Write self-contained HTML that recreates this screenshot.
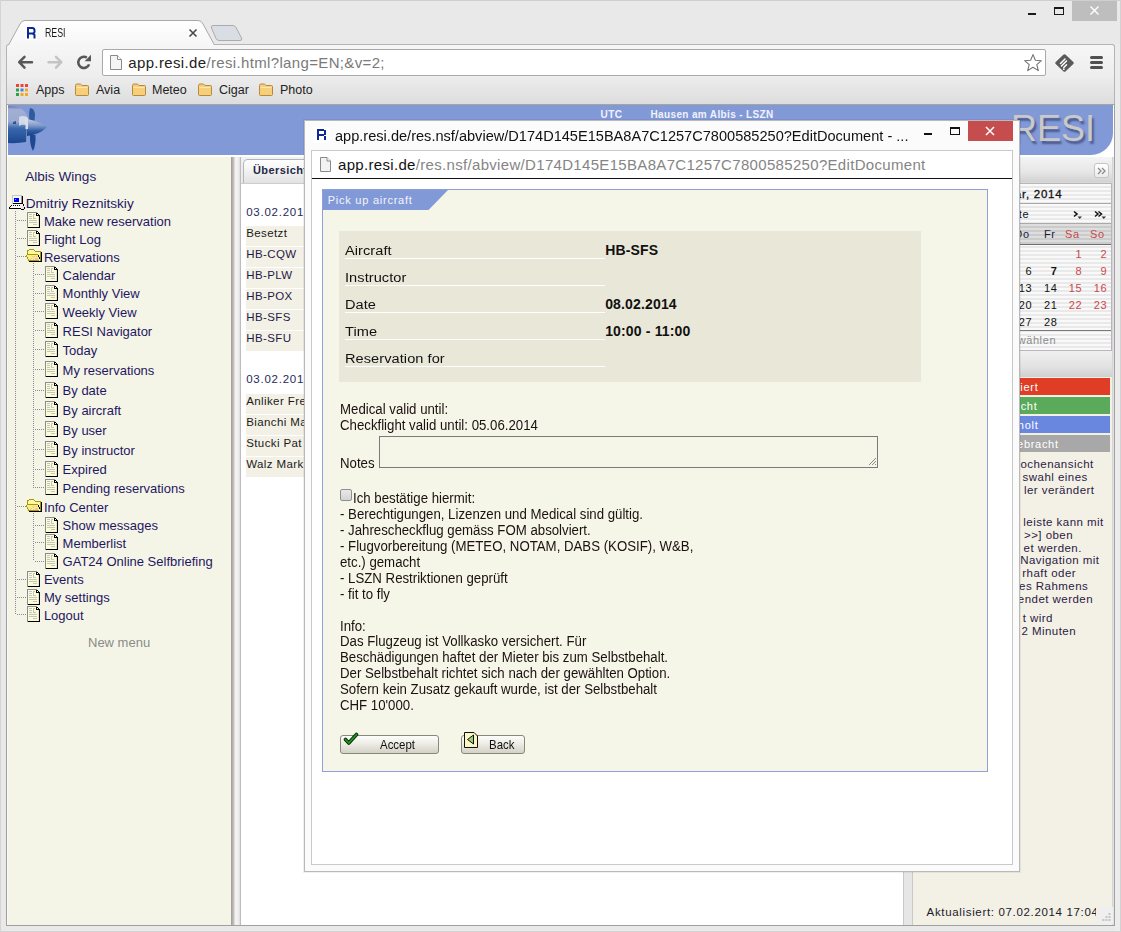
<!DOCTYPE html>
<html><head><meta charset="utf-8">
<style>
*{margin:0;padding:0;box-sizing:border-box}
html,body{width:1121px;height:932px;overflow:hidden;background:#e9e9e9;font-family:"Liberation Sans",sans-serif;position:relative}
.a{position:absolute}
.t{position:absolute;white-space:nowrap;line-height:16px}
.menu{color:#1f1763;font-size:13px}
.vd{font-size:11px;letter-spacing:0.65px}
</style></head><body>

<!-- ===== window frame ===== -->
<div class="a" style="left:0;top:0;width:1121px;height:1px;background:#cfcfcf"></div>
<div class="a" style="left:0;top:0;width:1px;height:932px;background:#d4d4d4"></div>
<div class="a" style="left:1115px;top:44px;width:5px;height:888px;background:#ececec"></div>
<div class="a" style="left:1120px;top:0;width:1px;height:932px;background:#d2d2d2"></div>
<div class="a" style="left:0;top:931px;width:1121px;height:1px;background:#d4d4d4"></div>

<!-- window controls -->
<div class="a" style="left:1028px;top:13px;width:8px;height:2px;background:#1a1a1a"></div>
<div class="a" style="left:1054px;top:7px;width:10px;height:8px;border:1px solid #1a1a1a;border-top-width:2px"></div>
<div class="a" style="left:1072px;top:1px;width:45px;height:20px;background:#bebebe"></div>
<svg class="a" style="left:1088px;top:5px" width="14" height="12"><path d="M2.5 1.5 L10.5 9.5 M10.5 1.5 L2.5 9.5" stroke="#fff" stroke-width="1.4"/></svg>

<!-- toolbar -->
<div class="a" style="left:6px;top:44px;width:1109px;height:61px;background:linear-gradient(#f6f6f6,#eeeeee 50%,#dcdcdc);border:1px solid #b4b4b4;border-bottom:none;border-radius:3px 3px 0 0"></div>

<!-- tab -->
<svg class="a" style="left:0;top:0" width="260" height="46">
 <defs><linearGradient id="tg" x1="0" y1="0" x2="0" y2="1"><stop offset="0" stop-color="#ffffff"/><stop offset="1" stop-color="#f6f6f6"/></linearGradient></defs>
 <path d="M8.5 45 L20 24 Q21.5 20.5 25 20.5 L198 20.5 Q201.5 20.5 203 24 L214.5 45" fill="url(#tg)" stroke="#a9a9a9" stroke-width="1"/>
 <path d="M211.5 28 Q210.5 25.5 213 25.5 L233 25.5 Q235 25.5 236 27.5 L241.5 38 Q242.5 40.5 240 40.5 L219 40.5 Q217 40.5 216 38.5 Z" fill="#d9dee5" stroke="#ababab" stroke-width="1"/>
</svg>
<div class="a" style="left:25px;top:26px;width:12px;height:14px;background:#fff"></div>
<svg class="a" style="left:26px;top:27px" width="11" height="13"><path d="M2 11.5 L2 1 L6.5 1 Q8.5 1 8.5 3.5 L8.5 4.5 Q8.5 6.5 6.5 6.5 L2 6.5 M6.5 6.5 L8.5 8 L8.5 11.5" stroke="#0a2896" stroke-width="2" fill="none"/></svg>
<div class="t" style="left:44.8px;top:26.3px;font-size:12.4px;color:#1a1a1a;line-height:14px;transform:scaleX(0.71);transform-origin:0 0">RESI</div>
<svg class="a" style="left:188px;top:28px" width="10" height="10"><path d="M1.5 1.5 L8.5 8.5 M8.5 1.5 L1.5 8.5" stroke="#4a4a4a" stroke-width="1.6"/></svg>

<!-- nav buttons -->
<svg class="a" style="left:16px;top:53px" width="80" height="20">
 <path d="M3.5 9.2 L16 9.2 M3.2 9.2 L8.5 3.8 M3.2 9.2 L8.5 14.6" stroke="#585858" stroke-width="2.5" fill="none" stroke-linecap="round" stroke-linejoin="round"/>
 <path d="M32.5 9.2 L45 9.2 M45.3 9.2 L40 3.8 M45.3 9.2 L40 14.6" stroke="#c4c4c4" stroke-width="2.5" fill="none" stroke-linecap="round" stroke-linejoin="round"/>
 <path d="M70.8 4.6 A5.6 5.6 0 1 0 73.1 11.4" stroke="#575757" stroke-width="2.6" fill="none"/>
 <path d="M75 1.8 L75 8.2 L68.6 8.2 Z" fill="#575757"/>
</svg>

<!-- address box -->
<div class="a" style="left:102px;top:49px;width:944px;height:27px;background:#fff;border:1px solid #a9a9a9;border-radius:2px"></div>
<svg class="a" style="left:109px;top:54px" width="14" height="17"><path d="M1.5 1.5 L8.5 1.5 L12.5 5.5 L12.5 15.5 L1.5 15.5 Z" fill="#f4f4f4" stroke="#8a8a8a"/><path d="M8.5 1.5 L8.5 5.5 L12.5 5.5" fill="#fff" stroke="#8a8a8a"/></svg>
<div class="t" style="left:128.3px;top:54px;font-size:15px;color:#222;line-height:18px;letter-spacing:0.35px">app.resi.de<span style="color:#7a7a7a">/resi.html?lang=EN;&amp;v=2;</span></div>
<svg class="a" style="left:1022px;top:52px" width="22" height="22"><path d="M11 2.6 L13.4 8.3 L19.4 8.7 L14.8 12.6 L16.3 18.6 L11 15.3 L5.7 18.6 L7.2 12.6 L2.6 8.7 L8.6 8.3 Z" fill="#fff" stroke="#747474" stroke-width="1.1" stroke-linejoin="round"/></svg>
<svg class="a" style="left:1054px;top:53px" width="22" height="20"><path d="M9.3 1.8 Q10.5 0.8 11.7 1.8 L19.3 9.0 Q20.3 10 19.3 11 L11.7 18.2 Q10.5 19.2 9.3 18.2 L1.7 11 Q0.7 10 1.7 9.0 Z" fill="#5a5a5a"/><path d="M6.5 10.5 L11 6 M7.5 13 L12.5 8 M9.8 14.5 L12.5 11.8" stroke="#fff" stroke-width="1.5" stroke-linecap="round"/><circle cx="9.8" cy="16.2" r="0.9" fill="#fff"/></svg>
<div class="a" style="left:1090px;top:56px;width:13px;height:3px;background:#505050;border-radius:1.5px"></div>
<div class="a" style="left:1090px;top:61px;width:13px;height:3px;background:#505050;border-radius:1.5px"></div>
<div class="a" style="left:1090px;top:66px;width:13px;height:3px;background:#505050;border-radius:1.5px"></div>

<!-- bookmarks -->
<svg class="a" style="left:15px;top:83px" width="14" height="14">
 <rect x="1" y="1" width="3" height="3" fill="#e8453c"/><rect x="5.5" y="1" width="3" height="3" fill="#e8453c"/><rect x="10" y="1" width="3" height="3" fill="#e8453c"/>
 <rect x="1" y="5.5" width="3" height="3" fill="#2fa04a"/><rect x="5.5" y="5.5" width="3" height="3" fill="#3b88e8"/><rect x="10" y="5.5" width="3" height="3" fill="#f5a623"/>
 <rect x="1" y="10" width="3" height="3" fill="#2fa04a"/><rect x="5.5" y="10" width="3" height="3" fill="#f5a623"/><rect x="10" y="10" width="3" height="3" fill="#f5a623"/>
</svg>
<div class="t" style="left:36px;top:82px;font-size:12.5px;color:#222;line-height:16px">Apps</div>
<svg class="a" style="left:74px;top:82px" width="16" height="15"><path d="M1.5 3.5 Q1.5 2 3 2 L6.5 2 L8 3.5 L13.5 3.5 Q14.5 3.5 14.5 4.5 L14.5 12.5 Q14.5 13.5 13.5 13.5 L2.5 13.5 Q1.5 13.5 1.5 12.5 Z" fill="#f7cf7a" stroke="#b58a3a"/><path d="M2.5 5.5 L13.5 5.5" stroke="#fbe7b5"/></svg><div class="t" style="left:96px;top:82px;font-size:12.5px;color:#222;line-height:16px">Avia</div>
<svg class="a" style="left:131px;top:82px" width="16" height="15"><path d="M1.5 3.5 Q1.5 2 3 2 L6.5 2 L8 3.5 L13.5 3.5 Q14.5 3.5 14.5 4.5 L14.5 12.5 Q14.5 13.5 13.5 13.5 L2.5 13.5 Q1.5 13.5 1.5 12.5 Z" fill="#f7cf7a" stroke="#b58a3a"/><path d="M2.5 5.5 L13.5 5.5" stroke="#fbe7b5"/></svg><div class="t" style="left:152px;top:82px;font-size:12.5px;color:#222;line-height:16px">Meteo</div>
<svg class="a" style="left:197px;top:82px" width="16" height="15"><path d="M1.5 3.5 Q1.5 2 3 2 L6.5 2 L8 3.5 L13.5 3.5 Q14.5 3.5 14.5 4.5 L14.5 12.5 Q14.5 13.5 13.5 13.5 L2.5 13.5 Q1.5 13.5 1.5 12.5 Z" fill="#f7cf7a" stroke="#b58a3a"/><path d="M2.5 5.5 L13.5 5.5" stroke="#fbe7b5"/></svg><div class="t" style="left:219px;top:82px;font-size:12.5px;color:#222;line-height:16px">Cigar</div>
<svg class="a" style="left:258px;top:82px" width="16" height="15"><path d="M1.5 3.5 Q1.5 2 3 2 L6.5 2 L8 3.5 L13.5 3.5 Q14.5 3.5 14.5 4.5 L14.5 12.5 Q14.5 13.5 13.5 13.5 L2.5 13.5 Q1.5 13.5 1.5 12.5 Z" fill="#f7cf7a" stroke="#b58a3a"/><path d="M2.5 5.5 L13.5 5.5" stroke="#fbe7b5"/></svg><div class="t" style="left:280px;top:82px;font-size:12.5px;color:#222;line-height:16px">Photo</div>


<!-- ===== page ===== -->
<div class="a" style="left:6px;top:104px;width:1109px;height:1px;background:#a8a49c"></div>
<div class="a" style="left:6px;top:105px;width:1109px;height:821px;background:#fff;border-left:1px solid #a0a0a0;border-right:1px solid #a0a0a0;border-bottom:1px solid #a0a0a0"></div>


<!-- banner -->
<div class="a" style="left:8px;top:105px;width:1105px;height:50px;background:#8299d7;border-bottom-right-radius:22px;overflow:hidden">
 <svg class="a" style="left:0;top:0" width="60" height="50">
  <defs>
   <linearGradient id="pb" x1="0" y1="0" x2="0" y2="1"><stop offset="0" stop-color="#5f7ab8"/><stop offset="0.1" stop-color="#a2afd4"/><stop offset="0.42" stop-color="#9aaad0"/><stop offset="0.6" stop-color="#3a68ac"/><stop offset="1" stop-color="#1a4890"/></linearGradient>
   <linearGradient id="pc" x1="0" y1="0" x2="0" y2="1"><stop offset="0" stop-color="#c4cee4"/><stop offset="0.4" stop-color="#7e98c8"/><stop offset="0.7" stop-color="#2d5ca6"/><stop offset="1" stop-color="#173f86"/></linearGradient>
   <filter id="bl" x="-20%" y="-20%" width="140%" height="140%"><feGaussianBlur stdDeviation="0.45"/></filter>
  </defs>
  <g filter="url(#bl)">
  <path d="M0 1 Q15 0 19 11 L18 37 Q10 38.5 0 38 Z" fill="url(#pb)"/>
  <path d="M22 3 Q26 3 27 9 L26.5 17 L21.5 17 Q20.5 8 22 3 Z" fill="#2d5a9e"/>
  <path d="M22 30 L27.5 30 Q28 40 25 46 Q21.5 40 22 30 Z" fill="#1c4a90"/>
  <path d="M19 14 Q30 16 39 22 Q31 30 19 31 Z" fill="url(#pc)"/>
  <path d="M17.5 11 L20 13 L20 24 L17.5 24 Z" fill="#d8dde8"/>
  <path d="M11 12 Q15 10 18 12 L18 20 Q14 19 11 21 Z" fill="#e6eaf2" opacity="0.75"/>
  <path d="M5 17 L8 16 L8 19 L5 19 Z" fill="#1a3f80" opacity="0.8"/>
  </g>
 </svg>
</div>
<div class="t" style="left:600.5px;top:108.6px;font-size:10px;font-weight:bold;color:#f0f2fc;line-height:12px;letter-spacing:0.5px">UTC</div>
<div class="t" style="left:650.5px;top:108.6px;font-size:10px;font-weight:bold;color:#f0f2fc;line-height:12px;letter-spacing:0.36px">Hausen am Albis - LSZN</div>
<div class="t" style="left:1011px;top:109px;font-size:36px;color:#c9c9c9;line-height:40px;text-shadow:2px 3px 2px #4a5a90">RESI</div>
<div class="a" style="left:8px;top:155px;width:1105px;height:2px;background:#fff"></div>

<!-- sidebar -->
<div class="a" style="left:7px;top:157px;width:224px;height:768px;background:#f5f5e7;border-left:1px solid #fafaf2"></div>
<div class="a" style="left:231px;top:157px;width:10px;height:768px;background:linear-gradient(90deg,#a19b95 0,#c9c6c2 3px,#f2f2f2 4px,#f2f2f2 7px,#e3e3e3 8px,#e3e3e3 9px,#bdbdbd 9px)"></div>

<div class="t menu" style="left:25.2px;top:168.80px;font-size:13.6px">Albis Wings</div>
<svg class="a" style="left:9px;top:195px" width="17" height="17" shape-rendering="crispEdges"><rect x="3" y="0" width="10" height="9" fill="#c8c8c8"/><rect x="4" y="1" width="8" height="7" fill="#f4f4f4"/><rect x="12" y="1" width="1" height="8" fill="#9a9a9a"/><rect x="13" y="1" width="1" height="8" fill="#000"/><rect x="4" y="8" width="10" height="1" fill="#000"/><rect x="5" y="3" width="5" height="4" fill="#0000f0"/><rect x="6" y="4" width="1" height="1" fill="#20e0f0"/><rect x="2" y="10" width="11" height="3" fill="#f8f8f8"/><g fill="#000"><rect x="2" y="10" width="1" height="1"/><rect x="4" y="10" width="1" height="1"/><rect x="6" y="10" width="1" height="1"/><rect x="8" y="10" width="1" height="1"/><rect x="10" y="10" width="1" height="1"/><rect x="1" y="11" width="1" height="1"/><rect x="0" y="12" width="1" height="1"/><rect x="0" y="13" width="12" height="1"/><rect x="14" y="9" width="1" height="3"/><rect x="15" y="12" width="1" height="2"/><rect x="12" y="14" width="3" height="1"/><rect x="14" y="13" width="1" height="1"/></g><rect x="12" y="11" width="3" height="3" fill="#e8e8e8"/></svg>
<div class="t menu" style="left:25.7px;top:195.60px;font-size:13.6px">Dmitriy Reznitskiy</div>
<div class="a" style="left:15px;top:211px;width:1px;height:404px;background:repeating-linear-gradient(180deg,#8a8a8a 0 1px,transparent 1px 2px)"></div>
<div class="a" style="left:33px;top:263px;width:1px;height:225px;background:repeating-linear-gradient(180deg,#8a8a8a 0 1px,transparent 1px 2px)"></div>
<div class="a" style="left:33px;top:513px;width:1px;height:48px;background:repeating-linear-gradient(180deg,#8a8a8a 0 1px,transparent 1px 2px)"></div>
<div class="a" style="left:17px;top:220px;width:10px;height:1px;background:repeating-linear-gradient(90deg,#8a8a8a 0 1px,transparent 1px 2px)"></div>
<svg class="a" style="left:27px;top:212px" width="14" height="17" shape-rendering="crispEdges"><rect x="1" y="1" width="11" height="14" fill="#fbfbd6"/><rect x="11" y="4" width="1" height="11" fill="#e2e2d0"/><rect x="0" y="0" width="10" height="1" fill="#8c8c8c"/><rect x="0" y="0" width="1" height="16" fill="#8c8c8c"/><rect x="12" y="3" width="1" height="13" fill="#000"/><rect x="1" y="15" width="12" height="1" fill="#000"/><rect x="10" y="1" width="1" height="1" fill="#000"/><rect x="11" y="2" width="1" height="1" fill="#000"/><rect x="10" y="2" width="1" height="1" fill="#fff"/><rect x="9" y="3" width="3" height="1" fill="#000"/><rect x="9" y="1" width="1" height="2" fill="#000"/><g fill="#c4c4c0"><rect x="2" y="2" width="3" height="1"/><rect x="2" y="4" width="3" height="1"/><rect x="2" y="6" width="3" height="1"/><rect x="6" y="2" width="2" height="1"/><rect x="6" y="2" width="1" height="5"/><rect x="6" y="6" width="3" height="1"/><rect x="2" y="8" width="8" height="1"/><rect x="2" y="10" width="8" height="1"/><rect x="6" y="12" width="4" height="1"/></g></svg>
<div class="t menu" style="left:43.9px;top:213.80px">Make new reservation</div>
<div class="a" style="left:17px;top:238px;width:10px;height:1px;background:repeating-linear-gradient(90deg,#8a8a8a 0 1px,transparent 1px 2px)"></div>
<svg class="a" style="left:27px;top:230px" width="14" height="17" shape-rendering="crispEdges"><rect x="1" y="1" width="11" height="14" fill="#fbfbd6"/><rect x="11" y="4" width="1" height="11" fill="#e2e2d0"/><rect x="0" y="0" width="10" height="1" fill="#8c8c8c"/><rect x="0" y="0" width="1" height="16" fill="#8c8c8c"/><rect x="12" y="3" width="1" height="13" fill="#000"/><rect x="1" y="15" width="12" height="1" fill="#000"/><rect x="10" y="1" width="1" height="1" fill="#000"/><rect x="11" y="2" width="1" height="1" fill="#000"/><rect x="10" y="2" width="1" height="1" fill="#fff"/><rect x="9" y="3" width="3" height="1" fill="#000"/><rect x="9" y="1" width="1" height="2" fill="#000"/><g fill="#c4c4c0"><rect x="2" y="2" width="3" height="1"/><rect x="2" y="4" width="3" height="1"/><rect x="2" y="6" width="3" height="1"/><rect x="6" y="2" width="2" height="1"/><rect x="6" y="2" width="1" height="5"/><rect x="6" y="6" width="3" height="1"/><rect x="2" y="8" width="8" height="1"/><rect x="2" y="10" width="8" height="1"/><rect x="6" y="12" width="4" height="1"/></g></svg>
<div class="t menu" style="left:43.9px;top:231.60px">Flight Log</div>
<div class="a" style="left:17px;top:256px;width:10px;height:1px;background:repeating-linear-gradient(90deg,#8a8a8a 0 1px,transparent 1px 2px)"></div>
<svg class="a" style="left:26px;top:249px" width="17" height="14" shape-rendering="crispEdges"><g fill="#fff7a0"><rect x="2" y="1" width="6" height="4"/><rect x="8" y="3" width="6" height="3"/></g><g fill="#a39b00"><rect x="3" y="0" width="5" height="1"/><rect x="1" y="1" width="2" height="1"/><rect x="1" y="1" width="1" height="5"/><rect x="8" y="1" width="1" height="1"/><rect x="9" y="2" width="6" height="1"/><rect x="14" y="2" width="1" height="10"/></g><rect x="15" y="3" width="1" height="10" fill="#000"/><rect x="1" y="6" width="12" height="6" fill="#f8ee90"/><g fill="#f4c0a0"><rect x="6" y="7" width="1" height="1"/><rect x="8" y="7" width="1" height="1"/><rect x="10" y="7" width="1" height="1"/><rect x="5" y="9" width="1" height="1"/><rect x="7" y="8" width="1" height="1"/><rect x="9" y="9" width="3" height="2"/><rect x="4" y="10" width="1" height="1"/><rect x="7" y="10" width="1" height="1"/></g><g fill="#a39b00"><rect x="1" y="5" width="11" height="1"/><rect x="0" y="6" width="1" height="2"/><rect x="1" y="8" width="1" height="2"/><rect x="2" y="10" width="1" height="2"/><rect x="3" y="11" width="10" height="1"/></g><rect x="12" y="6" width="1" height="2" fill="#000"/><rect x="13" y="8" width="1" height="2" fill="#000"/><rect x="3" y="12" width="13" height="1" fill="#000"/></svg>
<div class="t menu" style="left:43.9px;top:249.70px">Reservations</div>
<div class="a" style="left:35px;top:274px;width:10px;height:1px;background:repeating-linear-gradient(90deg,#8a8a8a 0 1px,transparent 1px 2px)"></div>
<svg class="a" style="left:45px;top:266px" width="14" height="17" shape-rendering="crispEdges"><rect x="1" y="1" width="11" height="14" fill="#fbfbd6"/><rect x="11" y="4" width="1" height="11" fill="#e2e2d0"/><rect x="0" y="0" width="10" height="1" fill="#8c8c8c"/><rect x="0" y="0" width="1" height="16" fill="#8c8c8c"/><rect x="12" y="3" width="1" height="13" fill="#000"/><rect x="1" y="15" width="12" height="1" fill="#000"/><rect x="10" y="1" width="1" height="1" fill="#000"/><rect x="11" y="2" width="1" height="1" fill="#000"/><rect x="10" y="2" width="1" height="1" fill="#fff"/><rect x="9" y="3" width="3" height="1" fill="#000"/><rect x="9" y="1" width="1" height="2" fill="#000"/><g fill="#c4c4c0"><rect x="2" y="2" width="3" height="1"/><rect x="2" y="4" width="3" height="1"/><rect x="2" y="6" width="3" height="1"/><rect x="6" y="2" width="2" height="1"/><rect x="6" y="2" width="1" height="5"/><rect x="6" y="6" width="3" height="1"/><rect x="2" y="8" width="8" height="1"/><rect x="2" y="10" width="8" height="1"/><rect x="6" y="12" width="4" height="1"/></g></svg>
<div class="t menu" style="left:62.6px;top:267.60px">Calendar</div>
<div class="a" style="left:35px;top:293px;width:10px;height:1px;background:repeating-linear-gradient(90deg,#8a8a8a 0 1px,transparent 1px 2px)"></div>
<svg class="a" style="left:45px;top:285px" width="14" height="17" shape-rendering="crispEdges"><rect x="1" y="1" width="11" height="14" fill="#fbfbd6"/><rect x="11" y="4" width="1" height="11" fill="#e2e2d0"/><rect x="0" y="0" width="10" height="1" fill="#8c8c8c"/><rect x="0" y="0" width="1" height="16" fill="#8c8c8c"/><rect x="12" y="3" width="1" height="13" fill="#000"/><rect x="1" y="15" width="12" height="1" fill="#000"/><rect x="10" y="1" width="1" height="1" fill="#000"/><rect x="11" y="2" width="1" height="1" fill="#000"/><rect x="10" y="2" width="1" height="1" fill="#fff"/><rect x="9" y="3" width="3" height="1" fill="#000"/><rect x="9" y="1" width="1" height="2" fill="#000"/><g fill="#c4c4c0"><rect x="2" y="2" width="3" height="1"/><rect x="2" y="4" width="3" height="1"/><rect x="2" y="6" width="3" height="1"/><rect x="6" y="2" width="2" height="1"/><rect x="6" y="2" width="1" height="5"/><rect x="6" y="6" width="3" height="1"/><rect x="2" y="8" width="8" height="1"/><rect x="2" y="10" width="8" height="1"/><rect x="6" y="12" width="4" height="1"/></g></svg>
<div class="t menu" style="left:62.6px;top:286.10px">Monthly View</div>
<div class="a" style="left:35px;top:311px;width:10px;height:1px;background:repeating-linear-gradient(90deg,#8a8a8a 0 1px,transparent 1px 2px)"></div>
<svg class="a" style="left:45px;top:303px" width="14" height="17" shape-rendering="crispEdges"><rect x="1" y="1" width="11" height="14" fill="#fbfbd6"/><rect x="11" y="4" width="1" height="11" fill="#e2e2d0"/><rect x="0" y="0" width="10" height="1" fill="#8c8c8c"/><rect x="0" y="0" width="1" height="16" fill="#8c8c8c"/><rect x="12" y="3" width="1" height="13" fill="#000"/><rect x="1" y="15" width="12" height="1" fill="#000"/><rect x="10" y="1" width="1" height="1" fill="#000"/><rect x="11" y="2" width="1" height="1" fill="#000"/><rect x="10" y="2" width="1" height="1" fill="#fff"/><rect x="9" y="3" width="3" height="1" fill="#000"/><rect x="9" y="1" width="1" height="2" fill="#000"/><g fill="#c4c4c0"><rect x="2" y="2" width="3" height="1"/><rect x="2" y="4" width="3" height="1"/><rect x="2" y="6" width="3" height="1"/><rect x="6" y="2" width="2" height="1"/><rect x="6" y="2" width="1" height="5"/><rect x="6" y="6" width="3" height="1"/><rect x="2" y="8" width="8" height="1"/><rect x="2" y="10" width="8" height="1"/><rect x="6" y="12" width="4" height="1"/></g></svg>
<div class="t menu" style="left:62.6px;top:304.90px">Weekly View</div>
<div class="a" style="left:35px;top:330px;width:10px;height:1px;background:repeating-linear-gradient(90deg,#8a8a8a 0 1px,transparent 1px 2px)"></div>
<svg class="a" style="left:45px;top:322px" width="14" height="17" shape-rendering="crispEdges"><rect x="1" y="1" width="11" height="14" fill="#fbfbd6"/><rect x="11" y="4" width="1" height="11" fill="#e2e2d0"/><rect x="0" y="0" width="10" height="1" fill="#8c8c8c"/><rect x="0" y="0" width="1" height="16" fill="#8c8c8c"/><rect x="12" y="3" width="1" height="13" fill="#000"/><rect x="1" y="15" width="12" height="1" fill="#000"/><rect x="10" y="1" width="1" height="1" fill="#000"/><rect x="11" y="2" width="1" height="1" fill="#000"/><rect x="10" y="2" width="1" height="1" fill="#fff"/><rect x="9" y="3" width="3" height="1" fill="#000"/><rect x="9" y="1" width="1" height="2" fill="#000"/><g fill="#c4c4c0"><rect x="2" y="2" width="3" height="1"/><rect x="2" y="4" width="3" height="1"/><rect x="2" y="6" width="3" height="1"/><rect x="6" y="2" width="2" height="1"/><rect x="6" y="2" width="1" height="5"/><rect x="6" y="6" width="3" height="1"/><rect x="2" y="8" width="8" height="1"/><rect x="2" y="10" width="8" height="1"/><rect x="6" y="12" width="4" height="1"/></g></svg>
<div class="t menu" style="left:62.6px;top:323.70px">RESI Navigator</div>
<div class="a" style="left:35px;top:349px;width:10px;height:1px;background:repeating-linear-gradient(90deg,#8a8a8a 0 1px,transparent 1px 2px)"></div>
<svg class="a" style="left:45px;top:341px" width="14" height="17" shape-rendering="crispEdges"><rect x="1" y="1" width="11" height="14" fill="#fbfbd6"/><rect x="11" y="4" width="1" height="11" fill="#e2e2d0"/><rect x="0" y="0" width="10" height="1" fill="#8c8c8c"/><rect x="0" y="0" width="1" height="16" fill="#8c8c8c"/><rect x="12" y="3" width="1" height="13" fill="#000"/><rect x="1" y="15" width="12" height="1" fill="#000"/><rect x="10" y="1" width="1" height="1" fill="#000"/><rect x="11" y="2" width="1" height="1" fill="#000"/><rect x="10" y="2" width="1" height="1" fill="#fff"/><rect x="9" y="3" width="3" height="1" fill="#000"/><rect x="9" y="1" width="1" height="2" fill="#000"/><g fill="#c4c4c0"><rect x="2" y="2" width="3" height="1"/><rect x="2" y="4" width="3" height="1"/><rect x="2" y="6" width="3" height="1"/><rect x="6" y="2" width="2" height="1"/><rect x="6" y="2" width="1" height="5"/><rect x="6" y="6" width="3" height="1"/><rect x="2" y="8" width="8" height="1"/><rect x="2" y="10" width="8" height="1"/><rect x="6" y="12" width="4" height="1"/></g></svg>
<div class="t menu" style="left:62.6px;top:342.90px">Today</div>
<div class="a" style="left:35px;top:369px;width:10px;height:1px;background:repeating-linear-gradient(90deg,#8a8a8a 0 1px,transparent 1px 2px)"></div>
<svg class="a" style="left:45px;top:361px" width="14" height="17" shape-rendering="crispEdges"><rect x="1" y="1" width="11" height="14" fill="#fbfbd6"/><rect x="11" y="4" width="1" height="11" fill="#e2e2d0"/><rect x="0" y="0" width="10" height="1" fill="#8c8c8c"/><rect x="0" y="0" width="1" height="16" fill="#8c8c8c"/><rect x="12" y="3" width="1" height="13" fill="#000"/><rect x="1" y="15" width="12" height="1" fill="#000"/><rect x="10" y="1" width="1" height="1" fill="#000"/><rect x="11" y="2" width="1" height="1" fill="#000"/><rect x="10" y="2" width="1" height="1" fill="#fff"/><rect x="9" y="3" width="3" height="1" fill="#000"/><rect x="9" y="1" width="1" height="2" fill="#000"/><g fill="#c4c4c0"><rect x="2" y="2" width="3" height="1"/><rect x="2" y="4" width="3" height="1"/><rect x="2" y="6" width="3" height="1"/><rect x="6" y="2" width="2" height="1"/><rect x="6" y="2" width="1" height="5"/><rect x="6" y="6" width="3" height="1"/><rect x="2" y="8" width="8" height="1"/><rect x="2" y="10" width="8" height="1"/><rect x="6" y="12" width="4" height="1"/></g></svg>
<div class="t menu" style="left:62.6px;top:362.90px">My reservations</div>
<div class="a" style="left:35px;top:390px;width:10px;height:1px;background:repeating-linear-gradient(90deg,#8a8a8a 0 1px,transparent 1px 2px)"></div>
<svg class="a" style="left:45px;top:382px" width="14" height="17" shape-rendering="crispEdges"><rect x="1" y="1" width="11" height="14" fill="#fbfbd6"/><rect x="11" y="4" width="1" height="11" fill="#e2e2d0"/><rect x="0" y="0" width="10" height="1" fill="#8c8c8c"/><rect x="0" y="0" width="1" height="16" fill="#8c8c8c"/><rect x="12" y="3" width="1" height="13" fill="#000"/><rect x="1" y="15" width="12" height="1" fill="#000"/><rect x="10" y="1" width="1" height="1" fill="#000"/><rect x="11" y="2" width="1" height="1" fill="#000"/><rect x="10" y="2" width="1" height="1" fill="#fff"/><rect x="9" y="3" width="3" height="1" fill="#000"/><rect x="9" y="1" width="1" height="2" fill="#000"/><g fill="#c4c4c0"><rect x="2" y="2" width="3" height="1"/><rect x="2" y="4" width="3" height="1"/><rect x="2" y="6" width="3" height="1"/><rect x="6" y="2" width="2" height="1"/><rect x="6" y="2" width="1" height="5"/><rect x="6" y="6" width="3" height="1"/><rect x="2" y="8" width="8" height="1"/><rect x="2" y="10" width="8" height="1"/><rect x="6" y="12" width="4" height="1"/></g></svg>
<div class="t menu" style="left:62.6px;top:383.10px">By date</div>
<div class="a" style="left:35px;top:409px;width:10px;height:1px;background:repeating-linear-gradient(90deg,#8a8a8a 0 1px,transparent 1px 2px)"></div>
<svg class="a" style="left:45px;top:401px" width="14" height="17" shape-rendering="crispEdges"><rect x="1" y="1" width="11" height="14" fill="#fbfbd6"/><rect x="11" y="4" width="1" height="11" fill="#e2e2d0"/><rect x="0" y="0" width="10" height="1" fill="#8c8c8c"/><rect x="0" y="0" width="1" height="16" fill="#8c8c8c"/><rect x="12" y="3" width="1" height="13" fill="#000"/><rect x="1" y="15" width="12" height="1" fill="#000"/><rect x="10" y="1" width="1" height="1" fill="#000"/><rect x="11" y="2" width="1" height="1" fill="#000"/><rect x="10" y="2" width="1" height="1" fill="#fff"/><rect x="9" y="3" width="3" height="1" fill="#000"/><rect x="9" y="1" width="1" height="2" fill="#000"/><g fill="#c4c4c0"><rect x="2" y="2" width="3" height="1"/><rect x="2" y="4" width="3" height="1"/><rect x="2" y="6" width="3" height="1"/><rect x="6" y="2" width="2" height="1"/><rect x="6" y="2" width="1" height="5"/><rect x="6" y="6" width="3" height="1"/><rect x="2" y="8" width="8" height="1"/><rect x="2" y="10" width="8" height="1"/><rect x="6" y="12" width="4" height="1"/></g></svg>
<div class="t menu" style="left:62.6px;top:402.90px">By aircraft</div>
<div class="a" style="left:35px;top:429px;width:10px;height:1px;background:repeating-linear-gradient(90deg,#8a8a8a 0 1px,transparent 1px 2px)"></div>
<svg class="a" style="left:45px;top:421px" width="14" height="17" shape-rendering="crispEdges"><rect x="1" y="1" width="11" height="14" fill="#fbfbd6"/><rect x="11" y="4" width="1" height="11" fill="#e2e2d0"/><rect x="0" y="0" width="10" height="1" fill="#8c8c8c"/><rect x="0" y="0" width="1" height="16" fill="#8c8c8c"/><rect x="12" y="3" width="1" height="13" fill="#000"/><rect x="1" y="15" width="12" height="1" fill="#000"/><rect x="10" y="1" width="1" height="1" fill="#000"/><rect x="11" y="2" width="1" height="1" fill="#000"/><rect x="10" y="2" width="1" height="1" fill="#fff"/><rect x="9" y="3" width="3" height="1" fill="#000"/><rect x="9" y="1" width="1" height="2" fill="#000"/><g fill="#c4c4c0"><rect x="2" y="2" width="3" height="1"/><rect x="2" y="4" width="3" height="1"/><rect x="2" y="6" width="3" height="1"/><rect x="6" y="2" width="2" height="1"/><rect x="6" y="2" width="1" height="5"/><rect x="6" y="6" width="3" height="1"/><rect x="2" y="8" width="8" height="1"/><rect x="2" y="10" width="8" height="1"/><rect x="6" y="12" width="4" height="1"/></g></svg>
<div class="t menu" style="left:62.6px;top:422.80px">By user</div>
<div class="a" style="left:35px;top:449px;width:10px;height:1px;background:repeating-linear-gradient(90deg,#8a8a8a 0 1px,transparent 1px 2px)"></div>
<svg class="a" style="left:45px;top:441px" width="14" height="17" shape-rendering="crispEdges"><rect x="1" y="1" width="11" height="14" fill="#fbfbd6"/><rect x="11" y="4" width="1" height="11" fill="#e2e2d0"/><rect x="0" y="0" width="10" height="1" fill="#8c8c8c"/><rect x="0" y="0" width="1" height="16" fill="#8c8c8c"/><rect x="12" y="3" width="1" height="13" fill="#000"/><rect x="1" y="15" width="12" height="1" fill="#000"/><rect x="10" y="1" width="1" height="1" fill="#000"/><rect x="11" y="2" width="1" height="1" fill="#000"/><rect x="10" y="2" width="1" height="1" fill="#fff"/><rect x="9" y="3" width="3" height="1" fill="#000"/><rect x="9" y="1" width="1" height="2" fill="#000"/><g fill="#c4c4c0"><rect x="2" y="2" width="3" height="1"/><rect x="2" y="4" width="3" height="1"/><rect x="2" y="6" width="3" height="1"/><rect x="6" y="2" width="2" height="1"/><rect x="6" y="2" width="1" height="5"/><rect x="6" y="6" width="3" height="1"/><rect x="2" y="8" width="8" height="1"/><rect x="2" y="10" width="8" height="1"/><rect x="6" y="12" width="4" height="1"/></g></svg>
<div class="t menu" style="left:62.6px;top:442.90px">By instructor</div>
<div class="a" style="left:35px;top:469px;width:10px;height:1px;background:repeating-linear-gradient(90deg,#8a8a8a 0 1px,transparent 1px 2px)"></div>
<svg class="a" style="left:45px;top:461px" width="14" height="17" shape-rendering="crispEdges"><rect x="1" y="1" width="11" height="14" fill="#fbfbd6"/><rect x="11" y="4" width="1" height="11" fill="#e2e2d0"/><rect x="0" y="0" width="10" height="1" fill="#8c8c8c"/><rect x="0" y="0" width="1" height="16" fill="#8c8c8c"/><rect x="12" y="3" width="1" height="13" fill="#000"/><rect x="1" y="15" width="12" height="1" fill="#000"/><rect x="10" y="1" width="1" height="1" fill="#000"/><rect x="11" y="2" width="1" height="1" fill="#000"/><rect x="10" y="2" width="1" height="1" fill="#fff"/><rect x="9" y="3" width="3" height="1" fill="#000"/><rect x="9" y="1" width="1" height="2" fill="#000"/><g fill="#c4c4c0"><rect x="2" y="2" width="3" height="1"/><rect x="2" y="4" width="3" height="1"/><rect x="2" y="6" width="3" height="1"/><rect x="6" y="2" width="2" height="1"/><rect x="6" y="2" width="1" height="5"/><rect x="6" y="6" width="3" height="1"/><rect x="2" y="8" width="8" height="1"/><rect x="2" y="10" width="8" height="1"/><rect x="6" y="12" width="4" height="1"/></g></svg>
<div class="t menu" style="left:62.6px;top:462.20px">Expired</div>
<div class="a" style="left:35px;top:487px;width:10px;height:1px;background:repeating-linear-gradient(90deg,#8a8a8a 0 1px,transparent 1px 2px)"></div>
<svg class="a" style="left:45px;top:479px" width="14" height="17" shape-rendering="crispEdges"><rect x="1" y="1" width="11" height="14" fill="#fbfbd6"/><rect x="11" y="4" width="1" height="11" fill="#e2e2d0"/><rect x="0" y="0" width="10" height="1" fill="#8c8c8c"/><rect x="0" y="0" width="1" height="16" fill="#8c8c8c"/><rect x="12" y="3" width="1" height="13" fill="#000"/><rect x="1" y="15" width="12" height="1" fill="#000"/><rect x="10" y="1" width="1" height="1" fill="#000"/><rect x="11" y="2" width="1" height="1" fill="#000"/><rect x="10" y="2" width="1" height="1" fill="#fff"/><rect x="9" y="3" width="3" height="1" fill="#000"/><rect x="9" y="1" width="1" height="2" fill="#000"/><g fill="#c4c4c0"><rect x="2" y="2" width="3" height="1"/><rect x="2" y="4" width="3" height="1"/><rect x="2" y="6" width="3" height="1"/><rect x="6" y="2" width="2" height="1"/><rect x="6" y="2" width="1" height="5"/><rect x="6" y="6" width="3" height="1"/><rect x="2" y="8" width="8" height="1"/><rect x="2" y="10" width="8" height="1"/><rect x="6" y="12" width="4" height="1"/></g></svg>
<div class="t menu" style="left:62.6px;top:480.90px">Pending reservations</div>
<div class="a" style="left:17px;top:506px;width:10px;height:1px;background:repeating-linear-gradient(90deg,#8a8a8a 0 1px,transparent 1px 2px)"></div>
<svg class="a" style="left:26px;top:499px" width="17" height="14" shape-rendering="crispEdges"><g fill="#fff7a0"><rect x="2" y="1" width="6" height="4"/><rect x="8" y="3" width="6" height="3"/></g><g fill="#a39b00"><rect x="3" y="0" width="5" height="1"/><rect x="1" y="1" width="2" height="1"/><rect x="1" y="1" width="1" height="5"/><rect x="8" y="1" width="1" height="1"/><rect x="9" y="2" width="6" height="1"/><rect x="14" y="2" width="1" height="10"/></g><rect x="15" y="3" width="1" height="10" fill="#000"/><rect x="1" y="6" width="12" height="6" fill="#f8ee90"/><g fill="#f4c0a0"><rect x="6" y="7" width="1" height="1"/><rect x="8" y="7" width="1" height="1"/><rect x="10" y="7" width="1" height="1"/><rect x="5" y="9" width="1" height="1"/><rect x="7" y="8" width="1" height="1"/><rect x="9" y="9" width="3" height="2"/><rect x="4" y="10" width="1" height="1"/><rect x="7" y="10" width="1" height="1"/></g><g fill="#a39b00"><rect x="1" y="5" width="11" height="1"/><rect x="0" y="6" width="1" height="2"/><rect x="1" y="8" width="1" height="2"/><rect x="2" y="10" width="1" height="2"/><rect x="3" y="11" width="10" height="1"/></g><rect x="12" y="6" width="1" height="2" fill="#000"/><rect x="13" y="8" width="1" height="2" fill="#000"/><rect x="3" y="12" width="13" height="1" fill="#000"/></svg>
<div class="t menu" style="left:43.9px;top:499.70px">Info Center</div>
<div class="a" style="left:35px;top:525px;width:10px;height:1px;background:repeating-linear-gradient(90deg,#8a8a8a 0 1px,transparent 1px 2px)"></div>
<svg class="a" style="left:45px;top:517px" width="14" height="17" shape-rendering="crispEdges"><rect x="1" y="1" width="11" height="14" fill="#fbfbd6"/><rect x="11" y="4" width="1" height="11" fill="#e2e2d0"/><rect x="0" y="0" width="10" height="1" fill="#8c8c8c"/><rect x="0" y="0" width="1" height="16" fill="#8c8c8c"/><rect x="12" y="3" width="1" height="13" fill="#000"/><rect x="1" y="15" width="12" height="1" fill="#000"/><rect x="10" y="1" width="1" height="1" fill="#000"/><rect x="11" y="2" width="1" height="1" fill="#000"/><rect x="10" y="2" width="1" height="1" fill="#fff"/><rect x="9" y="3" width="3" height="1" fill="#000"/><rect x="9" y="1" width="1" height="2" fill="#000"/><g fill="#c4c4c0"><rect x="2" y="2" width="3" height="1"/><rect x="2" y="4" width="3" height="1"/><rect x="2" y="6" width="3" height="1"/><rect x="6" y="2" width="2" height="1"/><rect x="6" y="2" width="1" height="5"/><rect x="6" y="6" width="3" height="1"/><rect x="2" y="8" width="8" height="1"/><rect x="2" y="10" width="8" height="1"/><rect x="6" y="12" width="4" height="1"/></g></svg>
<div class="t menu" style="left:62.6px;top:517.90px">Show messages</div>
<div class="a" style="left:35px;top:542px;width:10px;height:1px;background:repeating-linear-gradient(90deg,#8a8a8a 0 1px,transparent 1px 2px)"></div>
<svg class="a" style="left:45px;top:534px" width="14" height="17" shape-rendering="crispEdges"><rect x="1" y="1" width="11" height="14" fill="#fbfbd6"/><rect x="11" y="4" width="1" height="11" fill="#e2e2d0"/><rect x="0" y="0" width="10" height="1" fill="#8c8c8c"/><rect x="0" y="0" width="1" height="16" fill="#8c8c8c"/><rect x="12" y="3" width="1" height="13" fill="#000"/><rect x="1" y="15" width="12" height="1" fill="#000"/><rect x="10" y="1" width="1" height="1" fill="#000"/><rect x="11" y="2" width="1" height="1" fill="#000"/><rect x="10" y="2" width="1" height="1" fill="#fff"/><rect x="9" y="3" width="3" height="1" fill="#000"/><rect x="9" y="1" width="1" height="2" fill="#000"/><g fill="#c4c4c0"><rect x="2" y="2" width="3" height="1"/><rect x="2" y="4" width="3" height="1"/><rect x="2" y="6" width="3" height="1"/><rect x="6" y="2" width="2" height="1"/><rect x="6" y="2" width="1" height="5"/><rect x="6" y="6" width="3" height="1"/><rect x="2" y="8" width="8" height="1"/><rect x="2" y="10" width="8" height="1"/><rect x="6" y="12" width="4" height="1"/></g></svg>
<div class="t menu" style="left:62.6px;top:535.80px">Memberlist</div>
<div class="a" style="left:35px;top:561px;width:10px;height:1px;background:repeating-linear-gradient(90deg,#8a8a8a 0 1px,transparent 1px 2px)"></div>
<svg class="a" style="left:45px;top:553px" width="14" height="17" shape-rendering="crispEdges"><rect x="1" y="1" width="11" height="14" fill="#fbfbd6"/><rect x="11" y="4" width="1" height="11" fill="#e2e2d0"/><rect x="0" y="0" width="10" height="1" fill="#8c8c8c"/><rect x="0" y="0" width="1" height="16" fill="#8c8c8c"/><rect x="12" y="3" width="1" height="13" fill="#000"/><rect x="1" y="15" width="12" height="1" fill="#000"/><rect x="10" y="1" width="1" height="1" fill="#000"/><rect x="11" y="2" width="1" height="1" fill="#000"/><rect x="10" y="2" width="1" height="1" fill="#fff"/><rect x="9" y="3" width="3" height="1" fill="#000"/><rect x="9" y="1" width="1" height="2" fill="#000"/><g fill="#c4c4c0"><rect x="2" y="2" width="3" height="1"/><rect x="2" y="4" width="3" height="1"/><rect x="2" y="6" width="3" height="1"/><rect x="6" y="2" width="2" height="1"/><rect x="6" y="2" width="1" height="5"/><rect x="6" y="6" width="3" height="1"/><rect x="2" y="8" width="8" height="1"/><rect x="2" y="10" width="8" height="1"/><rect x="6" y="12" width="4" height="1"/></g></svg>
<div class="t menu" style="left:62.6px;top:554.00px">GAT24 Online Selfbriefing</div>
<div class="a" style="left:17px;top:579px;width:10px;height:1px;background:repeating-linear-gradient(90deg,#8a8a8a 0 1px,transparent 1px 2px)"></div>
<svg class="a" style="left:27px;top:571px" width="14" height="17" shape-rendering="crispEdges"><rect x="1" y="1" width="11" height="14" fill="#fbfbd6"/><rect x="11" y="4" width="1" height="11" fill="#e2e2d0"/><rect x="0" y="0" width="10" height="1" fill="#8c8c8c"/><rect x="0" y="0" width="1" height="16" fill="#8c8c8c"/><rect x="12" y="3" width="1" height="13" fill="#000"/><rect x="1" y="15" width="12" height="1" fill="#000"/><rect x="10" y="1" width="1" height="1" fill="#000"/><rect x="11" y="2" width="1" height="1" fill="#000"/><rect x="10" y="2" width="1" height="1" fill="#fff"/><rect x="9" y="3" width="3" height="1" fill="#000"/><rect x="9" y="1" width="1" height="2" fill="#000"/><g fill="#c4c4c0"><rect x="2" y="2" width="3" height="1"/><rect x="2" y="4" width="3" height="1"/><rect x="2" y="6" width="3" height="1"/><rect x="6" y="2" width="2" height="1"/><rect x="6" y="2" width="1" height="5"/><rect x="6" y="6" width="3" height="1"/><rect x="2" y="8" width="8" height="1"/><rect x="2" y="10" width="8" height="1"/><rect x="6" y="12" width="4" height="1"/></g></svg>
<div class="t menu" style="left:43.9px;top:572.10px">Events</div>
<div class="a" style="left:17px;top:597px;width:10px;height:1px;background:repeating-linear-gradient(90deg,#8a8a8a 0 1px,transparent 1px 2px)"></div>
<svg class="a" style="left:27px;top:589px" width="14" height="17" shape-rendering="crispEdges"><rect x="1" y="1" width="11" height="14" fill="#fbfbd6"/><rect x="11" y="4" width="1" height="11" fill="#e2e2d0"/><rect x="0" y="0" width="10" height="1" fill="#8c8c8c"/><rect x="0" y="0" width="1" height="16" fill="#8c8c8c"/><rect x="12" y="3" width="1" height="13" fill="#000"/><rect x="1" y="15" width="12" height="1" fill="#000"/><rect x="10" y="1" width="1" height="1" fill="#000"/><rect x="11" y="2" width="1" height="1" fill="#000"/><rect x="10" y="2" width="1" height="1" fill="#fff"/><rect x="9" y="3" width="3" height="1" fill="#000"/><rect x="9" y="1" width="1" height="2" fill="#000"/><g fill="#c4c4c0"><rect x="2" y="2" width="3" height="1"/><rect x="2" y="4" width="3" height="1"/><rect x="2" y="6" width="3" height="1"/><rect x="6" y="2" width="2" height="1"/><rect x="6" y="2" width="1" height="5"/><rect x="6" y="6" width="3" height="1"/><rect x="2" y="8" width="8" height="1"/><rect x="2" y="10" width="8" height="1"/><rect x="6" y="12" width="4" height="1"/></g></svg>
<div class="t menu" style="left:43.9px;top:590.30px">My settings</div>
<div class="a" style="left:17px;top:614px;width:10px;height:1px;background:repeating-linear-gradient(90deg,#8a8a8a 0 1px,transparent 1px 2px)"></div>
<svg class="a" style="left:27px;top:606px" width="14" height="17" shape-rendering="crispEdges"><rect x="1" y="1" width="11" height="14" fill="#fbfbd6"/><rect x="11" y="4" width="1" height="11" fill="#e2e2d0"/><rect x="0" y="0" width="10" height="1" fill="#8c8c8c"/><rect x="0" y="0" width="1" height="16" fill="#8c8c8c"/><rect x="12" y="3" width="1" height="13" fill="#000"/><rect x="1" y="15" width="12" height="1" fill="#000"/><rect x="10" y="1" width="1" height="1" fill="#000"/><rect x="11" y="2" width="1" height="1" fill="#000"/><rect x="10" y="2" width="1" height="1" fill="#fff"/><rect x="9" y="3" width="3" height="1" fill="#000"/><rect x="9" y="1" width="1" height="2" fill="#000"/><g fill="#c4c4c0"><rect x="2" y="2" width="3" height="1"/><rect x="2" y="4" width="3" height="1"/><rect x="2" y="6" width="3" height="1"/><rect x="6" y="2" width="2" height="1"/><rect x="6" y="2" width="1" height="5"/><rect x="6" y="6" width="3" height="1"/><rect x="2" y="8" width="8" height="1"/><rect x="2" y="10" width="8" height="1"/><rect x="6" y="12" width="4" height="1"/></g></svg>
<div class="t menu" style="left:43.9px;top:607.70px">Logout</div>
<div class="t menu" style="left:88.0px;top:634.90px;color:#8a8a8a">New menu</div>

<!-- main content -->
<div class="a" style="left:241px;top:157px;width:662px;height:27px;background:linear-gradient(#f2f2f2,#e8e8e8)"></div>
<div class="a" style="left:243px;top:159px;width:80px;height:24px;background:linear-gradient(#fefefe,#f6f6f6 35%,#e2e2e2);border:1px solid #b5b5b5;border-bottom:none;border-radius:5px 4px 0 0"></div>
<div class="a" style="left:241px;top:183px;width:662px;height:1px;background:#cdcdcd"></div>
<div class="t" style="left:253px;top:163px;font-size:11px;font-weight:bold;color:#1f2a44;line-height:14px;letter-spacing:0.4px">&Uuml;bersicht</div>
<div class="t" style="left:246.2px;top:204.73px;font-size:11.5px;letter-spacing:0.75px;line-height:14px;color:#1f2a5a">03.02.2014</div>
<div class="a" style="left:246px;top:226px;width:656px;height:20px;background:#f3f1e6"></div>
<div class="t" style="left:246.2px;top:225.73px;font-size:11.5px;letter-spacing:0.4px;line-height:14px;color:#1a1a1a">Besetzt</div>
<div class="a" style="left:246px;top:247px;width:656px;height:20px;background:#f3f1e6"></div>
<div class="t" style="left:246.2px;top:246.73px;font-size:11.5px;letter-spacing:0.4px;line-height:14px;color:#1e1a48">HB-CQW</div>
<div class="a" style="left:246px;top:268px;width:656px;height:20px;background:#f3f1e6"></div>
<div class="t" style="left:246.2px;top:267.73px;font-size:11.5px;letter-spacing:0.4px;line-height:14px;color:#1e1a48">HB-PLW</div>
<div class="a" style="left:246px;top:289px;width:656px;height:20px;background:#f3f1e6"></div>
<div class="t" style="left:246.2px;top:288.73px;font-size:11.5px;letter-spacing:0.4px;line-height:14px;color:#1e1a48">HB-POX</div>
<div class="a" style="left:246px;top:310px;width:656px;height:20px;background:#f3f1e6"></div>
<div class="t" style="left:246.2px;top:309.73px;font-size:11.5px;letter-spacing:0.4px;line-height:14px;color:#1e1a48">HB-SFS</div>
<div class="a" style="left:246px;top:331px;width:656px;height:20px;background:#f3f1e6"></div>
<div class="t" style="left:246.2px;top:330.73px;font-size:11.5px;letter-spacing:0.4px;line-height:14px;color:#1e1a48">HB-SFU</div>
<div class="t" style="left:246.2px;top:372.33px;font-size:11.5px;letter-spacing:0.75px;line-height:14px;color:#1f2a5a">03.02.2014</div>
<div class="a" style="left:246px;top:394px;width:656px;height:20px;background:#f3f1e6"></div>
<div class="t" style="left:246.2px;top:393.73px;font-size:11.5px;letter-spacing:0.4px;line-height:14px;color:#1a1a1a">Anliker Fre</div>
<div class="a" style="left:246px;top:415px;width:656px;height:20px;background:#f3f1e6"></div>
<div class="t" style="left:246.2px;top:414.73px;font-size:11.5px;letter-spacing:0.4px;line-height:14px;color:#1a1a1a">Bianchi Ma</div>
<div class="a" style="left:246px;top:436px;width:656px;height:20px;background:#f3f1e6"></div>
<div class="t" style="left:246.2px;top:435.73px;font-size:11.5px;letter-spacing:0.4px;line-height:14px;color:#1a1a1a">Stucki Pat</div>
<div class="a" style="left:246px;top:457px;width:656px;height:20px;background:#f3f1e6"></div>
<div class="t" style="left:246.2px;top:456.73px;font-size:11.5px;letter-spacing:0.4px;line-height:14px;color:#1a1a1a">Walz Mark</div>
<div class="a" style="left:903px;top:157px;width:10px;height:768px;background:#e6e6e6;border-left:1px solid #c9c9c9;border-right:1px solid #c9c9c9"></div>

<!-- right panel -->
<div class="a" style="left:913px;top:157px;width:199px;height:768px;background:#f3f1e5"></div>
<div class="a" style="left:1112px;top:157px;width:2px;height:768px;background:linear-gradient(90deg,#d4d4d4 0 1px,#e2e2e2 1px 2px)"></div>

<!-- right panel content -->
<div class="a" style="left:913px;top:157px;width:199px;height:26px;background:linear-gradient(#f4f4f4,#e6e6e6 60%,#d2d2d2);border-bottom:1px solid #d8d8d8"></div>
<div class="a" style="left:1094px;top:163px;width:15px;height:15px;background:linear-gradient(#fff,#ececec);border:1px solid #c4c4c4;border-radius:3px"></div>
<svg class="a" style="left:1096px;top:166px" width="12" height="10"><path d="M2 2 L5 5 L2 8 M6 2 L9 5 L6 8" stroke="#8a8a8a" stroke-width="1.3" fill="none"/></svg>
<div class="a" style="left:916px;top:183px;width:196px;height:168px;background:repeating-linear-gradient(180deg,#f9f9f9 0 2px,#e9e9e9 2px 4px);border:1px solid #bdb3bd"></div>
<div class="a" style="left:917px;top:203px;width:194px;height:1px;background:#a9a9a9"></div>
<div class="a" style="left:917px;top:223px;width:194px;height:1px;background:#a9a9a9"></div>
<div class="a" style="left:917px;top:224px;width:194px;height:20px;background:repeating-linear-gradient(180deg,#dedede 0 2px,#cbcbcb 2px 4px)"></div>
<div class="a" style="left:917px;top:244px;width:194px;height:1px;background:#6f6f6f"></div>
<div class="a" style="left:917px;top:330px;width:194px;height:1px;background:#7a7a7a"></div>
<div class="t" style="right:58.6px;top:187.3px;font-size:11.5px;line-height:14px;letter-spacing:0.75px;color:#111;-webkit-text-stroke:0.3px #111">Februar, 2014</div>
<div class="t" style="right:91.90px;top:206.69px;font-size:11px;line-height:14px;letter-spacing:0.6px;color:#111">Heute</div>
<svg class="a" style="left:1071px;top:209px" width="40" height="12"><path d="M3 2.5 L6 5 L3 7.5" stroke="#111" stroke-width="1.6" fill="none"/><path d="M6.5 7.5 L11 7.5 L8.75 10 Z" fill="#333"/><path d="M24 2.5 L27 5 L24 7.5 M27.5 2.5 L30.5 5 L27.5 7.5" stroke="#111" stroke-width="1.5" fill="none"/><path d="M30.5 7.5 L35 7.5 L32.75 10 Z" fill="#333"/></svg>
<div class="t" style="right:166.40px;top:226.79px;font-size:11px;line-height:14px;letter-spacing:0.6px;color:#1a1a3a">Mo</div>
<div class="t" style="right:141.40px;top:226.79px;font-size:11px;line-height:14px;letter-spacing:0.6px;color:#1a1a3a">Di</div>
<div class="t" style="right:116.40px;top:226.79px;font-size:11px;line-height:14px;letter-spacing:0.6px;color:#1a1a3a">Mi</div>
<div class="t" style="right:91.40px;top:226.79px;font-size:11px;line-height:14px;letter-spacing:0.6px;color:#1a1a3a">Do</div>
<div class="t" style="right:65.40px;top:226.79px;font-size:11px;line-height:14px;letter-spacing:0.6px;color:#1a1a3a">Fr</div>
<div class="t" style="right:41.40px;top:226.79px;font-size:11px;line-height:14px;letter-spacing:0.6px;color:#c84848">Sa</div>
<div class="t" style="right:16.40px;top:226.79px;font-size:11px;line-height:14px;letter-spacing:0.6px;color:#c84848">So</div>
<div class="t" style="right:38.90px;top:247.19px;font-size:11px;line-height:14px;letter-spacing:0.6px;color:#c84848">1</div>
<div class="t" style="right:13.90px;top:247.19px;font-size:11px;line-height:14px;letter-spacing:0.6px;color:#c84848">2</div>
<div class="t" style="right:163.90px;top:263.99px;font-size:11px;line-height:14px;letter-spacing:0.6px;color:#111">3</div>
<div class="t" style="right:138.90px;top:263.99px;font-size:11px;line-height:14px;letter-spacing:0.6px;color:#111">4</div>
<div class="t" style="right:113.90px;top:263.99px;font-size:11px;line-height:14px;letter-spacing:0.6px;color:#111">5</div>
<div class="t" style="right:88.90px;top:263.99px;font-size:11px;line-height:14px;letter-spacing:0.6px;color:#111">6</div>
<div class="t" style="right:63.60px;top:263.99px;font-size:11px;line-height:14px;letter-spacing:0.6px;color:#111;font-weight:bold">7</div>
<div class="t" style="right:38.90px;top:263.99px;font-size:11px;line-height:14px;letter-spacing:0.6px;color:#c84848">8</div>
<div class="t" style="right:13.90px;top:263.99px;font-size:11px;line-height:14px;letter-spacing:0.6px;color:#c84848">9</div>
<div class="t" style="right:163.90px;top:280.99px;font-size:11px;line-height:14px;letter-spacing:0.6px;color:#111">10</div>
<div class="t" style="right:138.90px;top:280.99px;font-size:11px;line-height:14px;letter-spacing:0.6px;color:#111">11</div>
<div class="t" style="right:113.90px;top:280.99px;font-size:11px;line-height:14px;letter-spacing:0.6px;color:#111">12</div>
<div class="t" style="right:88.90px;top:280.99px;font-size:11px;line-height:14px;letter-spacing:0.6px;color:#111">13</div>
<div class="t" style="right:63.60px;top:280.99px;font-size:11px;line-height:14px;letter-spacing:0.6px;color:#111">14</div>
<div class="t" style="right:38.90px;top:280.99px;font-size:11px;line-height:14px;letter-spacing:0.6px;color:#c84848">15</div>
<div class="t" style="right:13.90px;top:280.99px;font-size:11px;line-height:14px;letter-spacing:0.6px;color:#c84848">16</div>
<div class="t" style="right:163.90px;top:297.99px;font-size:11px;line-height:14px;letter-spacing:0.6px;color:#111">17</div>
<div class="t" style="right:138.90px;top:297.99px;font-size:11px;line-height:14px;letter-spacing:0.6px;color:#111">18</div>
<div class="t" style="right:113.90px;top:297.99px;font-size:11px;line-height:14px;letter-spacing:0.6px;color:#111">19</div>
<div class="t" style="right:88.90px;top:297.99px;font-size:11px;line-height:14px;letter-spacing:0.6px;color:#111">20</div>
<div class="t" style="right:63.60px;top:297.99px;font-size:11px;line-height:14px;letter-spacing:0.6px;color:#111">21</div>
<div class="t" style="right:38.90px;top:297.99px;font-size:11px;line-height:14px;letter-spacing:0.6px;color:#c84848">22</div>
<div class="t" style="right:13.90px;top:297.99px;font-size:11px;line-height:14px;letter-spacing:0.6px;color:#c84848">23</div>
<div class="t" style="right:163.90px;top:314.79px;font-size:11px;line-height:14px;letter-spacing:0.6px;color:#111">24</div>
<div class="t" style="right:138.90px;top:314.79px;font-size:11px;line-height:14px;letter-spacing:0.6px;color:#111">25</div>
<div class="t" style="right:113.90px;top:314.79px;font-size:11px;line-height:14px;letter-spacing:0.6px;color:#111">26</div>
<div class="t" style="right:88.90px;top:314.79px;font-size:11px;line-height:14px;letter-spacing:0.6px;color:#111">27</div>
<div class="t" style="right:63.60px;top:314.79px;font-size:11px;line-height:14px;letter-spacing:0.6px;color:#111">28</div>
<div class="t" style="right:64.90px;top:332.79px;font-size:11px;line-height:14px;letter-spacing:0.6px;color:#8c8c8c">Datum auswählen</div>
<div class="a" style="left:913px;top:351px;width:199px;height:26px;background:linear-gradient(#f0f0f0,#e2e2e2 60%,#d0d0d0)"></div>
<div class="a" style="left:917px;top:378px;width:193px;height:17px;background:#df3d25"></div>
<div class="t" style="right:82.60px;top:379.99px;font-size:11px;line-height:14px;letter-spacing:0.7px;color:#fff">Reserviert</div>
<div class="a" style="left:917px;top:397px;width:193px;height:17px;background:#5aaa5c"></div>
<div class="t" style="right:83.60px;top:399.19px;font-size:11px;line-height:14px;letter-spacing:0.7px;color:#fff">Gebucht</div>
<div class="a" style="left:917px;top:416px;width:193px;height:17px;background:#6987df"></div>
<div class="t" style="right:82.60px;top:418.09px;font-size:11px;line-height:14px;letter-spacing:0.7px;color:#fff">Abgeholt</div>
<div class="a" style="left:917px;top:435px;width:193px;height:17px;background:#a8a8a8"></div>
<div class="t" style="right:62.30px;top:436.89px;font-size:11px;line-height:14px;letter-spacing:0.7px;color:#fff">Zurückgebracht</div>
<div class="t" style="right:27.34px;top:457.62px;font-size:11.5px;line-height:13px;letter-spacing:0.46px;color:#2b1a45">ochenansicht</div>
<div class="t" style="right:33.24px;top:470.82px;font-size:11.5px;line-height:13px;letter-spacing:0.46px;color:#2b1a45">swahl eines</div>
<div class="t" style="right:26.54px;top:483.82px;font-size:11.5px;line-height:13px;letter-spacing:0.46px;color:#2b1a45">ler verändert</div>
<div class="t" style="right:17.24px;top:515.72px;font-size:11.5px;line-height:13px;letter-spacing:0.46px;color:#2b1a45">leiste kann mit</div>
<div class="t" style="right:47.94px;top:528.62px;font-size:11.5px;line-height:13px;letter-spacing:0.46px;color:#2b1a45">&gt;&gt;] oben</div>
<div class="t" style="right:39.14px;top:541.62px;font-size:11.5px;line-height:13px;letter-spacing:0.46px;color:#2b1a45">et werden.</div>
<div class="t" style="right:21.54px;top:554.12px;font-size:11.5px;line-height:13px;letter-spacing:0.46px;color:#2b1a45">Navigation mit</div>
<div class="t" style="right:44.94px;top:567.02px;font-size:11.5px;line-height:13px;letter-spacing:0.46px;color:#2b1a45">rhaft oder</div>
<div class="t" style="right:32.74px;top:579.92px;font-size:11.5px;line-height:13px;letter-spacing:0.46px;color:#2b1a45">des Rahmens</div>
<div class="t" style="right:27.94px;top:592.82px;font-size:11.5px;line-height:13px;letter-spacing:0.46px;color:#2b1a45">verwendet werden</div>
<div class="t" style="right:68.14px;top:612.12px;font-size:11.5px;line-height:13px;letter-spacing:0.46px;color:#2b1a45">t wird</div>
<div class="t" style="right:44.94px;top:624.92px;font-size:11.5px;line-height:13px;letter-spacing:0.46px;color:#2b1a45">2 Minuten</div>
<div class="t" style="left:926.6px;top:904.72px;font-size:11.5px;line-height:14px;letter-spacing:0.66px;color:#1a1a2a">Aktualisiert: 07.02.2014 17:04</div>
<div class="a" style="left:1096px;top:907px;width:17px;height:17px;background:#efefef"></div>
<svg class="a" style="left:1100px;top:910px" width="12" height="12"><rect x="8.5" y="3" width="2" height="2" fill="#c4c4c4"/><rect x="5.5" y="6" width="2" height="2" fill="#c4c4c4"/><rect x="8.5" y="6" width="2" height="2" fill="#c4c4c4"/><rect x="2.5" y="9" width="2" height="2" fill="#c4c4c4"/><rect x="5.5" y="9" width="2" height="2" fill="#c4c4c4"/><rect x="8.5" y="9" width="2" height="2" fill="#c4c4c4"/></svg>

<!-- POPUP -->
<div class="a" style="left:303px;top:119px;width:718px;height:754px;border:1px solid rgba(0,0,0,0.06)"></div>
<div class="a" style="left:304px;top:120px;width:716px;height:752px;background:#fbfbfb;border:1px solid #b9b9b9"></div>
<div class="a" style="left:968px;top:121px;width:45px;height:20px;background:#c64d4d"></div>
<svg class="a" style="left:983px;top:124px" width="14" height="14"><path d="M3 3 L11 11 M11 3 L3 11" stroke="#fff" stroke-width="1.5"/></svg>
<div class="a" style="left:950px;top:127px;width:10px;height:8px;border:1px solid #111;border-top-width:2px"></div>
<div class="a" style="left:924px;top:133px;width:8px;height:2px;background:#111"></div>
<div class="a" style="left:314px;top:127px;width:16px;height:16px;background:#fff"></div>
<svg class="a" style="left:316px;top:129px" width="12" height="14" shape-rendering="crispEdges"><g fill="#0a2896"><rect x="1" y="0" width="2" height="11"/><rect x="1" y="0" width="7" height="2"/><rect x="8" y="1" width="1.5" height="5"/><rect x="1" y="5" width="7" height="1.5"/><rect x="8" y="6.5" width="1.5" height="4.5"/></g></svg>
<div class="t" style="left:335.2px;top:123.6px;font-size:15.5px;line-height:24px;color:#111;transform:scaleX(0.94);transform-origin:0 0">app.resi.de/res.nsf/abview/D174D145E15BA8A7C1257C7800585250?EditDocument - ...</div>
<div class="a" style="left:311px;top:150px;width:702px;height:715px;background:#fff;border:1px solid #c9c9c9"></div>
<div class="a" style="left:312px;top:178px;width:700px;height:1px;background:#111"></div>
<svg class="a" style="left:319px;top:156px" width="14" height="18"><path d="M1.5 1.5 L8 1.5 L11.5 5 L11.5 15.5 L1.5 15.5 Z" fill="#f3f3f3" stroke="#8a8a8a"/><path d="M8 1.5 L8 5 L11.5 5" fill="#fff" stroke="#8a8a8a"/></svg>
<div class="t" style="left:338px;top:154.6px;font-size:15px;line-height:20px;letter-spacing:0.32px;color:#111">app.resi.de<span style="color:#858585">/res.nsf/abview/D174D145E15BA8A7C1257C7800585250?EditDocument</span></div>
<div class="a" style="left:322px;top:189px;width:666px;height:583px;background:#f5f5e8;border:1px solid #8ea0d8"></div>
<svg class="a" style="left:323px;top:190px" width="130" height="21"><path d="M0 0 L125 0 L105.5 20 L0 20 Z" fill="#8299d7"/></svg>
<div class="t" style="left:327.7px;top:192.89px;font-size:11px;line-height:14px;letter-spacing:0.76px;color:#f4f5fc">Pick up aircraft</div>
<div class="a" style="left:339px;top:231px;width:582px;height:151px;background:#e9e7d8"></div>
<div class="t" style="left:345.2px;top:244.15px;font-size:12px;line-height:14px;letter-spacing:0.05px;color:#111;transform:scaleX(1.215);transform-origin:0 0">Aircraft</div>
<div class="a" style="left:345px;top:258px;width:260px;height:1px;background:#fff"></div>
<div class="t" style="left:345.2px;top:271.15px;font-size:12px;line-height:14px;letter-spacing:0.05px;color:#111;transform:scaleX(1.215);transform-origin:0 0">Instructor</div>
<div class="a" style="left:345px;top:285px;width:260px;height:1px;background:#fff"></div>
<div class="t" style="left:345.2px;top:298.35px;font-size:12px;line-height:14px;letter-spacing:0.05px;color:#111;transform:scaleX(1.215);transform-origin:0 0">Date</div>
<div class="a" style="left:345px;top:312px;width:260px;height:1px;background:#fff"></div>
<div class="t" style="left:345.2px;top:325.35px;font-size:12px;line-height:14px;letter-spacing:0.05px;color:#111;transform:scaleX(1.215);transform-origin:0 0">Time</div>
<div class="a" style="left:345px;top:339px;width:260px;height:1px;background:#fff"></div>
<div class="t" style="left:345.2px;top:352.15px;font-size:12px;line-height:14px;letter-spacing:0.05px;color:#111;transform:scaleX(1.215);transform-origin:0 0">Reservation for</div>
<div class="a" style="left:345px;top:366px;width:260px;height:1px;background:#fff"></div>
<div class="t" style="left:605.2px;top:242.05px;font-size:14px;line-height:16px;letter-spacing:0.15px;color:#111;font-weight:bold">HB-SFS</div>
<div class="t" style="left:605.2px;top:296.05px;font-size:14px;line-height:16px;letter-spacing:0.15px;color:#111;font-weight:bold">08.02.2014</div>
<div class="t" style="left:605.2px;top:323.45px;font-size:14px;line-height:16px;letter-spacing:0.15px;color:#111;font-weight:bold">10:00 - 11:00</div>
<div class="t" style="left:340.3px;top:401.05px;font-size:14px;line-height:16px;color:#1c1010;transform:scaleX(0.945);transform-origin:0 0">Medical valid until:</div>
<div class="t" style="left:340.3px;top:416.95px;font-size:14px;line-height:16px;color:#1c1010;transform:scaleX(0.945);transform-origin:0 0">Checkflight valid until: 05.06.2014</div>
<div class="t" style="left:340.3px;top:455.25px;font-size:14px;line-height:16px;color:#1c1010;transform:scaleX(0.945);transform-origin:0 0">Notes</div>
<div class="a" style="left:379px;top:436px;width:499px;height:32px;border:1px solid #7a7a7a;background:#f5f5e8"></div>
<svg class="a" style="left:867px;top:456px" width="10" height="10"><path d="M9 2 L2 9 M9 5 L5 9 M9 8 L8 9" stroke="#888" stroke-width="1"/></svg>
<div class="a" style="left:340px;top:489px;width:12px;height:12px;border:1px solid #8f8f8f;border-radius:2px;background:linear-gradient(#e8e8e8,#d4d4d4)"></div>
<div class="t" style="left:353.2px;top:490.25px;font-size:14px;line-height:16px;color:#1c1010;transform:scaleX(0.945);transform-origin:0 0">Ich bestätige hiermit:</div>
<div class="t" style="left:340.3px;top:506.25px;font-size:14px;line-height:16px;color:#1c1010;transform:scaleX(0.945);transform-origin:0 0">- Berechtigungen, Lizenzen und Medical sind gültig.</div>
<div class="t" style="left:340.3px;top:522.25px;font-size:14px;line-height:16px;color:#1c1010;transform:scaleX(0.945);transform-origin:0 0">- Jahrescheckflug gemäss FOM absolviert.</div>
<div class="t" style="left:340.3px;top:538.25px;font-size:14px;line-height:16px;color:#1c1010;transform:scaleX(0.945);transform-origin:0 0">- Flugvorbereitung (METEO, NOTAM, DABS (KOSIF), W&amp;B,</div>
<div class="t" style="left:340.3px;top:554.25px;font-size:14px;line-height:16px;color:#1c1010;transform:scaleX(0.945);transform-origin:0 0">etc.) gemacht</div>
<div class="t" style="left:340.3px;top:570.25px;font-size:14px;line-height:16px;color:#1c1010;transform:scaleX(0.945);transform-origin:0 0">- LSZN Restriktionen geprüft</div>
<div class="t" style="left:340.3px;top:586.25px;font-size:14px;line-height:16px;color:#1c1010;transform:scaleX(0.945);transform-origin:0 0">- fit to fly</div>
<div class="t" style="left:340.3px;top:617.55px;font-size:14px;line-height:16px;color:#1c1010;transform:scaleX(0.945);transform-origin:0 0">Info:</div>
<div class="t" style="left:340.3px;top:633.25px;font-size:14px;line-height:16px;color:#1c1010;transform:scaleX(0.945);transform-origin:0 0">Das Flugzeug ist Vollkasko versichert. Für</div>
<div class="t" style="left:340.3px;top:649.25px;font-size:14px;line-height:16px;color:#1c1010;transform:scaleX(0.945);transform-origin:0 0">Beschädigungen haftet der Mieter bis zum Selbstbehalt.</div>
<div class="t" style="left:340.3px;top:665.25px;font-size:14px;line-height:16px;color:#1c1010;transform:scaleX(0.945);transform-origin:0 0">Der Selbstbehalt richtet sich nach der gewählten Option.</div>
<div class="t" style="left:340.3px;top:681.25px;font-size:14px;line-height:16px;color:#1c1010;transform:scaleX(0.945);transform-origin:0 0">Sofern kein Zusatz gekauft wurde, ist der Selbstbehalt</div>
<div class="t" style="left:340.3px;top:697.25px;font-size:14px;line-height:16px;color:#1c1010;transform:scaleX(0.945);transform-origin:0 0">CHF 10'000.</div>
<div class="a" style="left:340px;top:735px;width:99px;height:19px;background:linear-gradient(#fdfdfb,#efeee8 40%,#d4d2c6);border:1px solid #8a887c;border-radius:3px"></div>
<div class="t" style="left:379.6px;top:737.6px;font-size:13px;line-height:14px;letter-spacing:0px;color:#111;transform:scaleX(0.88);transform-origin:0 0">Accept</div>
<svg class="a" style="left:343px;top:732px" width="17" height="15"><path d="M2.5 7.5 L5.8 11 L13.5 2.5" stroke="#0a2a0a" stroke-width="3.6" fill="none" stroke-linejoin="round" stroke-linecap="round"/><path d="M2.5 7.5 L5.8 11 L13.5 2.5" stroke="#1f9a1f" stroke-width="1.8" fill="none" stroke-linejoin="round" stroke-linecap="round"/></svg>
<div class="a" style="left:461px;top:735px;width:64px;height:19px;background:linear-gradient(#fdfdfb,#efeee8 40%,#d4d2c6);border:1px solid #8a887c;border-radius:3px"></div>
<div class="t" style="left:489px;top:737.6px;font-size:13px;line-height:14px;letter-spacing:0px;color:#111;transform:scaleX(0.88);transform-origin:0 0">Back</div>
<svg class="a" style="left:463px;top:731px" width="16" height="18"><path d="M1.5 1.5 L11 1.5 L14.5 5 L14.5 16.5 L1.5 16.5 Z" fill="#fcf6c6" stroke="#111"/><path d="M10.5 4 L10.5 13 L4.5 8.5 Z" fill="#9ad07a" stroke="#111" stroke-width="1"/></svg>
</body></html>
